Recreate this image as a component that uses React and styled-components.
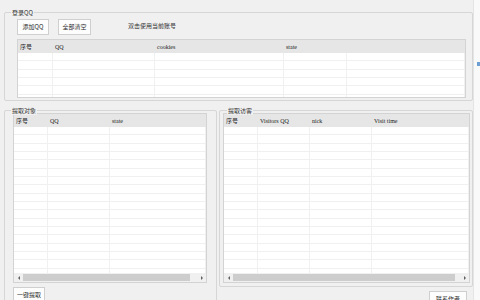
import React from "react";
import styled, { createGlobalStyle } from "styled-components";

const GlobalStyle = createGlobalStyle`
  html, body {
    margin: 0;
    padding: 0;
    background: #f0f0f0;
  }
  * {
    box-sizing: border-box;
  }
`;

const Window = styled.div`
  width: 480px;
  height: 300px;
  display: flex;
  overflow: hidden;
  background: #f0f0f0;
  font-family: "Liberation Serif", "Noto Sans CJK SC", serif;
  font-size: 6px;
  line-height: 1;
  color: #2b2b2b;
`;

const Main = styled.div`
  width: 473px;
  flex: none;
  padding-left: 4px;
  display: flex;
  flex-direction: column;
`;

const SideStrip = styled.div`
  flex: 1;
  background: #f9f9f9;
  border-left: 1px solid #e4e4e4;
  display: flex;
  flex-direction: column;
  padding-top: 62px;
  align-items: flex-end;
`;

const SideMark = styled.div`
  width: 3px;
  height: 4px;
  background: #6f9fd0;
`;

const GroupBox = styled.div`
  position: relative;
  border: 1px solid #d6d6d6;
  border-radius: 2px;
  display: flex;
  flex-direction: column;
  width: ${(p) => p.$w}px;
  height: ${(p) => (p.$h ? `${p.$h}px` : "auto")};
  padding: ${(p) => p.$pad};
  margin-top: ${(p) => p.$mt || 0}px;
  flex: none;
`;

const Legend = styled.span`
  position: absolute;
  top: -4px;
  left: ${(p) => p.$left || 6}px;
  padding: 0 1px;
  background: #f0f0f0;
  font-family: "Noto Sans CJK SC", sans-serif;
  font-size: 6px;
  line-height: 8px;
  color: #333;
`;

const Toolbar = styled.div`
  display: flex;
  align-items: flex-start;
  height: 16px;
`;

const Button = styled.button`
  flex: none;
  width: ${(p) => p.$w}px;
  height: 16px;
  margin: 0;
  margin-left: ${(p) => p.$ml || 0}px;
  padding: 0;
  border: 1px solid #cfcfcf;
  background: #fdfdfd;
  font-family: "Noto Sans CJK SC", sans-serif;
  font-size: 6px;
  line-height: 1;
  color: #2b2b2b;
`;

const Hint = styled.span`
  margin-left: 37px;
  margin-top: 3px;
  font-family: "Noto Sans CJK SC", sans-serif;
  font-size: 6px;
  line-height: 8px;
  color: #333;
`;

const Table = styled.div`
  flex: none;
  width: ${(p) => p.$w}px;
  height: ${(p) => p.$h}px;
  margin-top: ${(p) => p.$mt || 0}px;
  border: 1px solid #d3d3d3;
  background: #ffffff;
  display: flex;
  flex-direction: column;
  overflow: hidden;
`;

const HeadRow = styled.div`
  flex: none;
  display: grid;
  grid-template-columns: ${(p) => p.$cols};
  height: 13px;
  background: #e6e6e6;
`;

const HeadCell = styled.div`
  display: flex;
  align-items: center;
  padding-left: 2px;
  white-space: nowrap;
  overflow: hidden;
  color: #222;
`;

const Body = styled.div`
  flex: 1;
  overflow: hidden;
`;

const Row = styled.div`
  display: grid;
  grid-template-columns: ${(p) => p.$cols};
  height: 8.33px;
`;

const Cell = styled.div`
  border-right: 1px solid #f0f0f0;
  border-bottom: 1px solid #f0f0f0;
`;

const ScrollBar = styled.div`
  flex: none;
  height: 9px;
  display: flex;
  align-items: center;
  background: #f0f0f0;
`;

const ArrowBox = styled.div`
  flex: none;
  width: 9px;
  height: 9px;
  display: flex;
  align-items: center;
  justify-content: center;
`;

const Arrow = styled.div`
  width: 0;
  height: 0;
  border-top: 2px solid transparent;
  border-bottom: 2px solid transparent;
  ${(p) =>
    p.$dir === "left"
      ? "border-right: 2px solid #606060;"
      : "border-left: 2px solid #606060;"}
`;

const Track = styled.div`
  flex: 1;
  height: 9px;
  display: flex;
  align-items: center;
`;

const Thumb = styled.div`
  height: 7px;
  background: #cdcdcd;
`;

const BottomRow = styled.div`
  display: flex;
  align-items: flex-start;
  margin-top: 9px;
`;

const RightColumn = styled.div`
  margin-left: 2px;
  display: flex;
  flex-direction: column;
`;

const ButtonRow = styled.div`
  display: flex;
  justify-content: ${(p) => p.$justify || "flex-start"};
  margin-top: 4px;
  padding-right: ${(p) => p.$pr || 0}px;
`;

function Grid({ cols, headers, rows, w, h, mt, thumb }) {
  return (
    <Table $w={w} $h={h} $mt={mt}>
      <HeadRow $cols={cols}>
        {headers.map((t, i) => (
          <HeadCell key={i}>{t}</HeadCell>
        ))}
      </HeadRow>
      <Body>
        {Array.from({ length: rows }).map((_, r) => (
          <Row key={r} $cols={cols}>
            {headers.map((_, c) => (
              <Cell key={c} />
            ))}
          </Row>
        ))}
      </Body>
      {thumb && (
        <ScrollBar>
          <ArrowBox>
            <Arrow $dir="left" />
          </ArrowBox>
          <Track>
            <Thumb style={{ width: thumb }} />
          </Track>
          <ArrowBox>
            <Arrow $dir="right" />
          </ArrowBox>
        </ScrollBar>
      )}
    </Table>
  );
}

export default function App() {
  return (
    <>
      <GlobalStyle />
      <Window>
        <Main>
          <GroupBox $w={469} $h={89} $mt={12} $pad="6px 6px 2px 12px">
            <Legend>登录QQ</Legend>
            <Toolbar>
              <Button $w={32}>添加QQ</Button>
              <Button $w={33} $ml={9}>
                全部清空
              </Button>
              <Hint>双击使用当前账号</Hint>
            </Toolbar>
            <Grid
              w={449}
              h={59}
              mt={4}
              cols="35px 102px 129px 63px 1fr"
              headers={["序号", "QQ", "cookies", "state", ""]}
              rows={6}
            />
          </GroupBox>

          <BottomRow>
            <GroupBox $w={213} $h={200} $pad="2px 9px 0 8px">
              <Legend>提取对象</Legend>
              <Grid
                w={194}
                h={170}
                cols="34px 62px 1fr"
                headers={["序号", "QQ", "state"]}
                rows={18}
                thumb={167}
              />
              <ButtonRow>
                <Button $w={32}>一键提取</Button>
              </ButtonRow>
            </GroupBox>

            <RightColumn>
              <GroupBox $w={254} $h={177} $pad="2px 2px 3px 3px">
                <Legend $left={7}>提取访客</Legend>
                <Grid
                  w={247}
                  h={170}
                  cols="34px 52px 62px 1fr"
                  headers={["序号", "Visitors QQ", "nick", "Visit time"]}
                  rows={18}
                  thumb={222}
                />
              </GroupBox>
              <ButtonRow $justify="flex-end" $pr={6}>
                <Button $w={38}>联系作者</Button>
              </ButtonRow>
            </RightColumn>
          </BottomRow>
        </Main>
        <SideStrip>
          <SideMark />
        </SideStrip>
      </Window>
    </>
  );
}
